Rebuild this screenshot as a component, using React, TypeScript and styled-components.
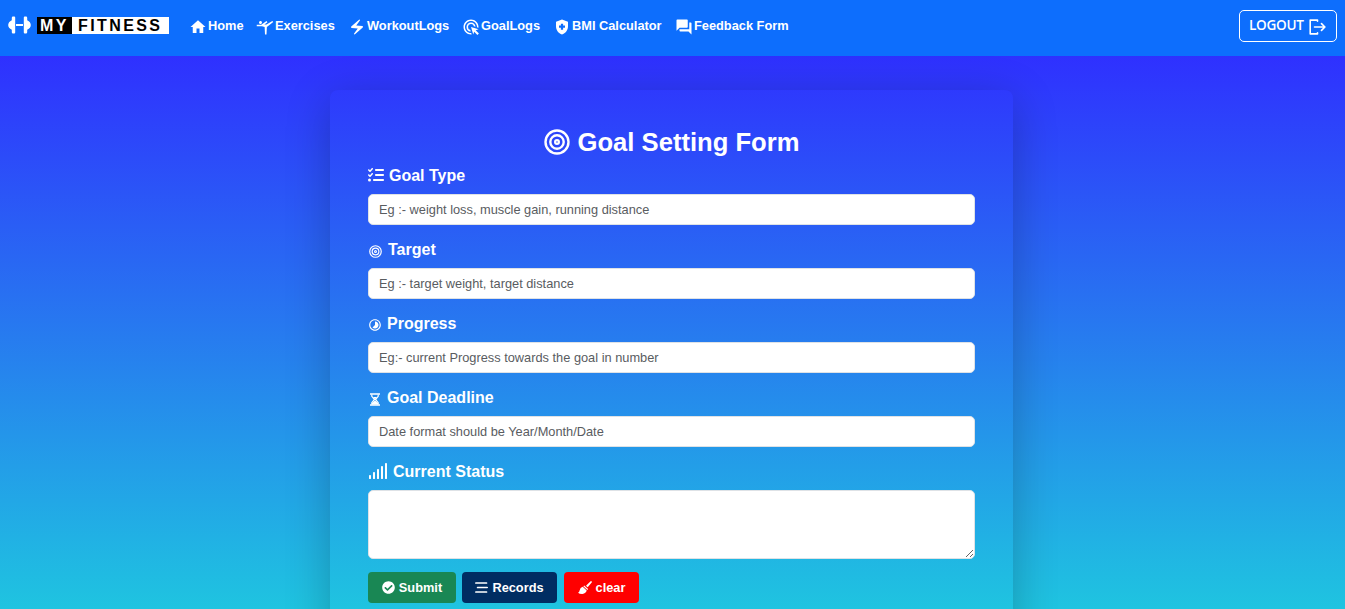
import React from "react";
import styled, { createGlobalStyle } from "styled-components";
import {
  MdHome,
  MdElectricBolt,
  MdSportsGymnastics,
  MdAdsClick,
  MdHealthAndSafety,
  MdForum,
} from "react-icons/md";
import { FaListCheck } from "react-icons/fa6";
import { FaCheckCircle } from "react-icons/fa";
import { RiProgress5Line } from "react-icons/ri";

const GlobalStyle = createGlobalStyle`
  *, *::before, *::after { box-sizing: border-box; }
  html, body { margin: 0; height: 100%; overflow: hidden; }
  body { font-family: "Liberation Sans", Arial, sans-serif; color: #fff; }
  svg { display: block; flex: none; }
`;

const Page = styled.div`
  height: 609px;
  overflow: hidden;
  display: flex;
  flex-direction: column;
  background: linear-gradient(to bottom, #2f2fff 50px, #1fc4e0 609px);
`;

const Navbar = styled.nav`
  position: relative;
  z-index: 1;
  flex: none;
  height: 56px;
  padding: 0 8px;
  display: flex;
  align-items: center;
  background: #0d6efd;
`;

const Brand = styled.div`
  display: flex;
  align-items: center;
  gap: 6px;
  margin: -7px 21px 0 0;
`;

const BrandText = styled.div`
  display: flex;
  font-size: 16px;
  line-height: 17px;
  font-weight: 700;
  letter-spacing: 2.4px;
  margin-top: 2px;
`;

const BrandPart = styled.span<{ $dark?: boolean; $width: number }>`
  width: ${(p) => p.$width}px;
  padding-left: ${(p) => (p.$dark ? 3 : 6)}px;
  background: ${(p) => (p.$dark ? "#000" : "#fff")};
  color: ${(p) => (p.$dark ? "#fff" : "#000")};
`;

const NavItem = styled.a<{ $width: number }>`
  width: ${(p) => p.$width}px;
  display: flex;
  align-items: center;
  font-size: 12.8px;
  font-weight: 700;
  white-space: nowrap;
  margin-top: -5px;
`;

const NavIcon = styled.span`
  margin: 2px 0.7px 0 -0.7px;
`;

const LogoutButton = styled.button`
  margin: -4px 0 0 auto;
  width: 98px;
  height: 32px;
  padding: 0 10px 0 9px;
  display: flex;
  align-items: center;
  justify-content: space-between;
  border: 1px solid #fff;
  border-radius: 5px;
  background: transparent;
  color: #fff;
  font: 600 13.6px/28px "Open Sans", sans-serif;
  letter-spacing: -0.3px;

  span { margin-top: -3px; }
  svg { margin-top: 1px; }
`;

const Card = styled.main`
  flex: none;
  width: 683px;
  height: 600px;
  margin: 34px 0 0 330px;
  padding: 35px 38px;
  border-radius: 8px;
  box-shadow: 0 10px 45px rgba(0, 0, 0, 0.24);
`;

const Title = styled.h1`
  margin: 0 0 3px;
  height: 35px;
  display: flex;
  align-items: center;
  justify-content: center;
  gap: 8px;
  font-size: 25.6px;
  font-weight: 700;

  svg { margin-top: -1px; }
`;

const Field = styled.div`
  margin-bottom: 12px;
`;

const Label = styled.label<{ $gap: number; $drop?: number; $indent?: number }>`
  display: flex;
  align-items: center;
  gap: ${(p) => p.$gap}px;
  height: 31px;
  padding: 0 0 5px ${(p) => p.$indent ?? 0}px;
  font-size: 16px;
  font-weight: 700;

  svg { margin-top: ${(p) => p.$drop ?? 0}px; }
`;

const Input = styled.input`
  display: block;
  width: 100%;
  height: 31px;
  padding: 0 10px;
  border: 1px solid #dee2e6;
  border-radius: 5px;
  background: #fff;
  font: 12.8px "Liberation Sans", Arial, sans-serif;
  &::placeholder { color: #595c5f; opacity: 1; }
`;

const TextArea = styled.textarea`
  display: block;
  width: 100%;
  height: 69px;
  border: 1px solid #dee2e6;
  border-radius: 5px;
  background: #fff;
`;

const Actions = styled.div`
  display: flex;
  margin-top: 13px;
`;

const ActionButton = styled.button<{ $color: string; $width: number; $space?: number }>`
  width: ${(p) => p.$width}px;
  height: 31px;
  margin-right: ${(p) => p.$space ?? 0}px;
  padding: 0;
  display: flex;
  align-items: center;
  justify-content: center;
  gap: 4px;
  border: 0;
  border-radius: 4px;
  background: ${(p) => p.$color};
  color: #fff;
  font: 700 12.8px "Liberation Sans", Arial, sans-serif;
`;

const Dumbbell = () => (
  <svg width="23" height="18" viewBox="0 0 23 18" fill="#fff">
    <path d="M5 .6h1.200q1 0 1 1v14.800q0 1-1 1H5q-1.200 0-1.200-1.200v-2.400Q.2 12 .2 9t3.600-4.800V1.800Q3.800.6 5 .6zM18 .6h-1.200q-1 0-1 1v14.800q0 1 1 1H18q1.200 0 1.200-1.200v-2.400Q22.800 12 22.800 9t-3.600-4.800V1.800Q19.200.6 18 .6z" />
    <rect x="8" y="8" width="7" height="2" />
  </svg>
);

const Target = ({ size }: { size: number }) => (
  <svg width={size} height={size} viewBox="0 0 26 26" fill="none" stroke="#fff" strokeWidth="2.400">
    <circle cx="13" cy="13" r="11.500" />
    <circle cx="13" cy="13" r="6.700" />
    <circle cx="13" cy="13" r="1.900" strokeWidth="2.200" />
  </svg>
);

const Hourglass = () => (
  <svg width="12" height="13" viewBox="0 0 12 13" fill="none" stroke="#fff">
    <path d="M1 1h10M1 12h10" strokeWidth="1.600" />
    <path d="M2.800 1.500v1.800L5.500 6.500 2.800 9.700v1.800M9.200 1.500v1.800L6.500 6.500l2.700 3.200v1.800" strokeWidth="1.200" />
    <path d="M4 4h4L6 6.500zM3 11.500V10l3-2.500L9 10v1.500z" fill="#fff" stroke="none" />
  </svg>
);

const Signal = () => (
  <svg width="19" height="16" viewBox="0 0 19 16" fill="#fff">
    <rect x="1" y="12" width="2" height="4" rx=".4" />
    <rect x="5" y="9" width="2" height="7" rx=".4" />
    <rect x="9" y="6" width="2" height="10" rx=".4" />
    <rect x="13" y="3" width="2" height="13" rx=".4" />
    <rect x="17" y="0" width="2" height="16" rx=".4" />
  </svg>
);

const Exit = () => (
  <svg width="17" height="16" viewBox="0 0 17 16" fill="none" stroke="#fff" strokeWidth="1.600" strokeLinecap="round" strokeLinejoin="round">
    <path d="M8.500 2.200V1.100H1.200v13.800h7.300v-1.100M5.500 8h10.300M12.500 4.600L15.900 8l-3.400 3.400" />
  </svg>
);

const Rows = () => (
  <svg width="13" height="11" viewBox="0 0 13 11" stroke="#fff" strokeWidth="1.700" strokeLinecap="round">
    <path d="M.9 1h10.600M2.600 5.500h9.600M.9 10h10.600" />
  </svg>
);

const Brush = () => (
  <svg width="14" height="13" viewBox="0 0 14 13" fill="#fff">
    <path d="M12.600.3q.7-.4 1.100.1t0 1L9.700 6.300 8 4.700z" />
    <path d="M6.200 4.400l3.900 3.700-.8.900L5.300 5.200z" />
    <path d="M4.700 5.800L8.700 9.600Q8 12.600 4.400 12.900Q1.600 13 0 11.700Q1.300 11.300 1.600 9.500Q2.100 6.500 4.700 5.800z" />
  </svg>
);

export default function App() {
  return (
    <Page>
      <GlobalStyle />
      <Navbar>
        <Brand>
          <Dumbbell />
          <BrandText>
            <BrandPart $dark $width={35}>MY</BrandPart>
            <BrandPart $width={97}>FITNESS</BrandPart>
          </BrandText>
        </Brand>
        <NavItem $width={67}><NavIcon><MdHome size={18} /></NavIcon>Home</NavItem>
        <NavItem $width={92}><NavIcon><MdSportsGymnastics size={18} /></NavIcon>Exercises</NavItem>
        <NavItem $width={114}><NavIcon><MdElectricBolt size={18} /></NavIcon>WorkoutLogs</NavItem>
        <NavItem $width={91}><NavIcon><MdAdsClick size={18} /></NavIcon>GoalLogs</NavItem>
        <NavItem $width={122}><NavIcon><MdHealthAndSafety size={18} /></NavIcon>BMI Calculator</NavItem>
        <NavItem $width={120}><NavIcon><MdForum size={18} /></NavIcon>Feedback Form</NavItem>
        <LogoutButton><span>LOGOUT</span><Exit /></LogoutButton>
      </Navbar>
      <Card>
        <Title><Target size={26} />Goal Setting Form</Title>
        <Field>
          <Label $gap={5} $drop={-2}><FaListCheck size={16} />Goal Type</Label>
          <Input placeholder="Eg :- weight loss, muscle gain, running distance" />
        </Field>
        <Field>
          <Label $gap={6} $drop={2} $indent={1}><Target size={13} />Target</Label>
          <Input placeholder="Eg :- target weight, target distance" />
        </Field>
        <Field>
          <Label $gap={5} $drop={2}><RiProgress5Line size={14} />Progress</Label>
          <Input placeholder="Eg:- current Progress towards the goal in number" />
        </Field>
        <Field>
          <Label $gap={6} $drop={2} $indent={1}><Hourglass />Goal Deadline</Label>
          <Input placeholder="Date format should be Year/Month/Date" />
        </Field>
        <Field>
          <Label $gap={6} $drop={-2}><Signal />Current Status</Label>
          <TextArea />
        </Field>
        <Actions>
          <ActionButton $color="#198754" $width={88} $space={6}><FaCheckCircle size={13} />Submit</ActionButton>
          <ActionButton $color="#002d62" $width={95} $space={7}><Rows />Records</ActionButton>
          <ActionButton $color="#ff0000" $width={75}><Brush />clear</ActionButton>
        </Actions>
      </Card>
    </Page>
  );
}
